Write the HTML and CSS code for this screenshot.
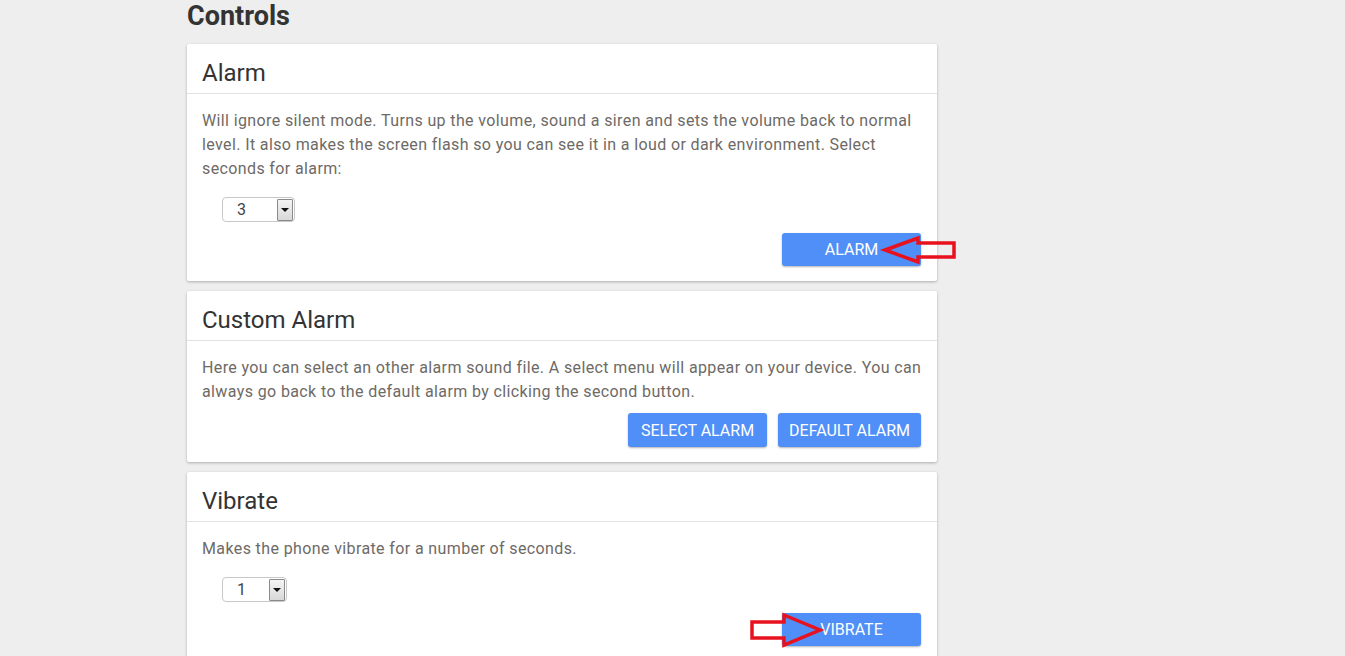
FILE: index.html
```html
<!DOCTYPE html>
<html lang="en">
<head>
  <meta charset="UTF-8" />
  <title>Controls</title>
  <link rel="stylesheet" href="styles.css">
</head>
<body>

  <div class="page">
    <h1>Controls</h1>

    <!-- Alarm -->
    <div class="card">
      <div class="card-header">Alarm</div>
      <div class="card-body">
        <p>Will ignore silent mode. Turns up the volume, sound a siren and sets the volume back to normal level. It also makes the screen flash so you can see it in a loud or dark environment. Select seconds for alarm:</p>
        <div class="select">
          <span class="select-value">3</span>
          <span class="select-btn"><span class="caret"></span></span>
        </div>
        <div class="actions">
          <button>Alarm</button>
        </div>
      </div>
    </div>

    <!-- Custom Alarm -->
    <div class="card">
      <div class="card-header">Custom Alarm</div>
      <div class="card-body">
        <p>Here you can select an other alarm sound file. A select menu will appear on your device. You can always go back to the default alarm by clicking the second button.</p>
        <div class="actions tight">
          <button>Select alarm</button>
          <button>Default alarm</button>
        </div>
      </div>
    </div>

    <!-- Vibrate -->
    <div class="card">
      <div class="card-header">Vibrate</div>
      <div class="card-body">
        <p>Makes the phone vibrate for a number of seconds.</p>
        <div class="select small">
          <span class="select-value">1</span>
          <span class="select-btn"><span class="caret"></span></span>
        </div>
        <div class="actions">
          <button>Vibrate</button>
        </div>
      </div>
    </div>
  </div>

  <!-- red annotation arrows drawn over the screenshot -->
  <svg class="marks" width="1345" height="656" viewBox="0 0 1345 656">
    <polygon points="885,250 918,238 918,243 954,243 954,257 918,257 918,262" />
    <polygon points="752,622 784,622 784,615 820,630 784,645 784,638 752,638" />
  </svg>

</body>
</html>
```

FILE: styles.css
```css
* {
  box-sizing: border-box;
}

body {
  margin: 0;
  padding: 0;
  background-color: #eeeeee;
  font-family: Roboto, "Liberation Sans", Arial, sans-serif;
  color: #333;
  overflow: hidden;
}

.page {
  width: 750px;
  margin-left: 187px;
}

h1 {
  margin: 0 0 12px;
  font-size: 27px;
  line-height: 32px;
  font-weight: bold;
  color: #333;
}

.card {
  background-color: white;
  border-radius: 2px;
  box-shadow: 0 1px 3px rgba(0, 0, 0, 0.28);
  margin-bottom: 10px;
}

.card-header {
  padding: 15px 15px 6px;
  font-size: 24px;
  line-height: 28px;
  color: #333;
  border-bottom: 1px solid #e2e2e2;
}

.card-body {
  padding: 15px 15px 15px;
}

.card-body p {
  margin: 0;
  font-size: 16px;
  line-height: 24px;
  letter-spacing: 0.38px;
  color: #6e6a66;
}

.select {
  display: flex;
  align-items: center;
  justify-content: space-between;
  width: 73px;
  height: 25px;
  margin: 16px 0 0 20px;
  padding: 0 1px 0 14px;
  border: 1px solid #c8c8c8;
  border-radius: 4px;
  background-color: white;
}

.select.small {
  width: 65px;
}

.select-value {
  font-size: 16px;
  color: #444;
}

.select-btn {
  display: flex;
  align-items: center;
  justify-content: center;
  width: 16px;
  height: 22px;
  border: 1px solid #8a8a8a;
  border-radius: 1px;
  background: linear-gradient(#f4f4f4, #d8d8d8);
}

.caret {
  width: 0;
  height: 0;
  border-left: 4px solid transparent;
  border-right: 4px solid transparent;
  border-top: 4px solid #111;
}

.actions {
  display: flex;
  justify-content: flex-end;
  gap: 11px;
  margin-top: 11px;
  padding-right: 1px;
}

.actions.tight {
  margin-top: 9px;
}

button {
  min-width: 139px;
  height: 33px;
  padding: 0 11px;
  border: none;
  border-radius: 3px;
  background-color: #4f8ff7;
  color: white;
  font-family: Roboto, "Liberation Sans", Arial, sans-serif;
  font-size: 16px;
  text-transform: uppercase;
  box-shadow: 0 1px 2px rgba(0, 0, 0, 0.3);
  cursor: pointer;
}

.actions.tight button {
  height: 34px;
}

button:hover {
  background-color: #3b7ce6;
}

.marks {
  position: absolute;
  top: 0;
  left: 0;
  pointer-events: none;
}

.marks polygon {
  fill: none;
  stroke: #e8121e;
  stroke-width: 3.5;
  stroke-linejoin: miter;
}
```
